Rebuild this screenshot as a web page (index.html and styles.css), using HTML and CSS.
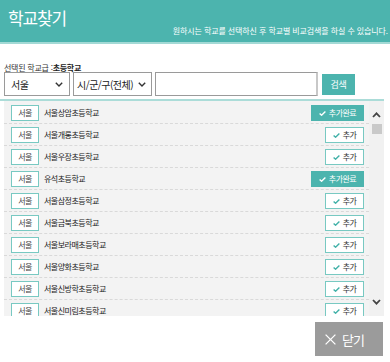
FILE: index.html
```html
<!DOCTYPE html>
<html lang="ko">
<head>
<meta charset="utf-8">
<title>학교찾기</title>
<link rel="stylesheet" href="styles.css">
</head>
<body>
<div class="header">
  <h1 class="title">학교찾기</h1>
  <p class="subtitle">원하시는 학교를 선택하신 후 학교별 비교검색을 하실 수 있습니다.</p>
</div>
<div class="content">
  <div class="level">선택된 학교급 :<b>초등학교</b></div>
  <div class="filters">
    <div class="select select-city"><span>서울</span><svg class="chev" width="8" height="5" viewBox="0 0 8 5"><polyline points="0.8,0.8 4,4 7.2,0.8" fill="none" stroke="#333" stroke-width="1.4"/></svg></div>
    <div class="select select-gu"><span>시/군/구(전체)</span><svg class="chev" width="8" height="5" viewBox="0 0 8 5"><polyline points="0.8,0.8 4,4 7.2,0.8" fill="none" stroke="#333" stroke-width="1.4"/></svg></div>
    <div class="search-input"></div>
    <div class="search-btn">검색</div>
  </div>
</div>
<div class="list">
  <div class="rows">
    <div class="row"><span class="region">서울</span><span class="name">서울상암초등학교</span><span class="btn done"><svg width="7" height="5" viewBox="0 0 7 5"><polyline points="0.6,2.4 2.6,4.2 6.4,0.6" fill="none" stroke="#fff" stroke-width="1.4"/></svg>추가완료</span></div>
    <div class="row"><span class="region">서울</span><span class="name">서울개롱초등학교</span><span class="btn add"><svg width="7" height="5" viewBox="0 0 7 5"><polyline points="0.6,2.4 2.6,4.2 6.4,0.6" fill="none" stroke="#3fb0a7" stroke-width="1.4"/></svg>추가</span></div>
    <div class="row"><span class="region">서울</span><span class="name">서울우장초등학교</span><span class="btn add"><svg width="7" height="5" viewBox="0 0 7 5"><polyline points="0.6,2.4 2.6,4.2 6.4,0.6" fill="none" stroke="#3fb0a7" stroke-width="1.4"/></svg>추가</span></div>
    <div class="row"><span class="region">서울</span><span class="name">유석초등학교</span><span class="btn done"><svg width="7" height="5" viewBox="0 0 7 5"><polyline points="0.6,2.4 2.6,4.2 6.4,0.6" fill="none" stroke="#fff" stroke-width="1.4"/></svg>추가완료</span></div>
    <div class="row"><span class="region">서울</span><span class="name">서울삼정초등학교</span><span class="btn add"><svg width="7" height="5" viewBox="0 0 7 5"><polyline points="0.6,2.4 2.6,4.2 6.4,0.6" fill="none" stroke="#3fb0a7" stroke-width="1.4"/></svg>추가</span></div>
    <div class="row"><span class="region">서울</span><span class="name">서울금북초등학교</span><span class="btn add"><svg width="7" height="5" viewBox="0 0 7 5"><polyline points="0.6,2.4 2.6,4.2 6.4,0.6" fill="none" stroke="#3fb0a7" stroke-width="1.4"/></svg>추가</span></div>
    <div class="row"><span class="region">서울</span><span class="name">서울보라매초등학교</span><span class="btn add"><svg width="7" height="5" viewBox="0 0 7 5"><polyline points="0.6,2.4 2.6,4.2 6.4,0.6" fill="none" stroke="#3fb0a7" stroke-width="1.4"/></svg>추가</span></div>
    <div class="row"><span class="region">서울</span><span class="name">서울양화초등학교</span><span class="btn add"><svg width="7" height="5" viewBox="0 0 7 5"><polyline points="0.6,2.4 2.6,4.2 6.4,0.6" fill="none" stroke="#3fb0a7" stroke-width="1.4"/></svg>추가</span></div>
    <div class="row"><span class="region">서울</span><span class="name">서울신방학초등학교</span><span class="btn add"><svg width="7" height="5" viewBox="0 0 7 5"><polyline points="0.6,2.4 2.6,4.2 6.4,0.6" fill="none" stroke="#3fb0a7" stroke-width="1.4"/></svg>추가</span></div>
    <div class="row"><span class="region">서울</span><span class="name">서울신미림초등학교</span><span class="btn add"><svg width="7" height="5" viewBox="0 0 7 5"><polyline points="0.6,2.4 2.6,4.2 6.4,0.6" fill="none" stroke="#3fb0a7" stroke-width="1.4"/></svg>추가</span></div>
  </div>
  <div class="scrollbar">
    <svg class="arrow-up" width="9" height="6" viewBox="0 0 9 6"><polyline points="1,5 4.5,1.3 8,5" fill="none" stroke="#444" stroke-width="1.8"/></svg>
    <div class="thumb"></div>
    <svg class="arrow-down" width="9" height="6" viewBox="0 0 9 6"><polyline points="1,1 4.5,4.7 8,1" fill="none" stroke="#444" stroke-width="1.8"/></svg>
  </div>
</div>
<div class="footer">
  <div class="close-btn"><svg width="11" height="11" viewBox="0 0 11 11"><path d="M0.6 0.6 L10.4 10.4 M10.4 0.6 L0.6 10.4" stroke="#fff" stroke-width="1.3" fill="none"/></svg><span>닫기</span></div>
</div>
</body>
</html>
```

FILE: styles.css
```css
* { box-sizing: border-box; }
html, body { margin: 0; padding: 0; background: #fff; }
body {
  font-family: "Noto Sans CJK KR", "Noto Sans", sans-serif;
  color: #333;
  width: 390px;
  height: 362px;
  overflow: hidden;
}

.header {
  height: 44px;
  background: #4cb4ae;
  border-bottom: 2px solid #a3d9d5;
  display: flex;
  justify-content: space-between;
  padding: 0 2px 0 8px;
}
.title {
  margin: 0;
  padding-top: 9px;
  font-size: 17px;
  line-height: 17px;
  font-weight: 400;
  letter-spacing: -1.1px;
  color: #fff;
  align-self: flex-start;
}
.subtitle {
  margin: 0;
  align-self: flex-end;
  padding-bottom: 7px;
  font-size: 8px;
  line-height: 8px;
  letter-spacing: -0.1px;
  color: #fff;
}

.content { padding: 0 4px; }
.level {
  margin-top: 19px;
  font-size: 8px;
  line-height: 9px;
  letter-spacing: -0.25px;
  color: #333;
}
.level b { font-weight: 700; color: #222; }

.filters {
  display: flex;
  align-items: center;
  height: 24px;
}
.select {
  height: 24px;
  border: 1px solid #9a9a9a;
  display: flex;
  align-items: center;
  justify-content: space-between;
  font-size: 10px;
  letter-spacing: -0.5px;
  color: #222;
  background: #fff;
}
.select-city { width: 66px; padding: 0 6px 0 6px; }
.select-gu { width: 79px; margin-left: 3px; padding: 0 5px 0 3px; }
.search-input {
  width: 163px;
  height: 24px;
  margin-left: 3px;
  border: 1px solid #9a9a9a;
  border-right: 2px solid #c8c8c8;
  background: #fff;
}
.search-btn {
  width: 33px;
  height: 21px;
  margin-left: 4px;
  background: #4cb4ae;
  color: #fff;
  font-size: 9px;
  letter-spacing: -0.3px;
  display: flex;
  align-items: center;
  justify-content: center;
}

.list {
  margin-top: 3px;
  width: 384px;
  border-top: 2px solid #abdcd8;
  display: flex;
  height: 217px;
}
.rows {
  margin-left: 4px;
  width: 365px;
  padding-top: 1px;
  background: #f3f3f3;
  overflow: hidden;
}
.row {
  height: 22px;
  border-bottom: 1px dashed #d9d9d9;
  display: flex;
  align-items: flex-start;
  padding: 3px 5px 0 7px;
  font-size: 8px;
  letter-spacing: -0.5px;
}
.region {
  width: 28px;
  height: 16px;
  border: 1px solid #78c9c2;
  background: #fff;
  color: #444;
  display: flex;
  align-items: center;
  justify-content: center;
  line-height: 1;
}
.name {
  margin-left: 5px;
  line-height: 16px;
  color: #222;
}
.btn {
  margin-left: auto;
  height: 16px;
  display: flex;
  align-items: center;
  justify-content: center;
  line-height: 1;
}
.btn svg { margin-right: 3px; }
.done {
  width: 53px;
  background: #4cb4ae;
  color: #fff;
}
.add {
  width: 39px;
  border: 1px solid #78c9c2;
  background: #fff;
  color: #333;
}

.scrollbar {
  width: 15px;
  background: #f1f1f1;
  display: flex;
  flex-direction: column;
  align-items: center;
}
.arrow-up { margin-top: 11px; }
.thumb {
  margin-top: 6px;
  width: 10px;
  height: 10px;
  background: #c9c9c9;
}
.arrow-down { margin-top: auto; margin-bottom: 11px; }

.footer {
  display: flex;
  justify-content: flex-end;
  padding: 6px 7px 0 0;
}
.close-btn {
  width: 68px;
  height: 34px;
  background: #9b9b9b;
  display: flex;
  align-items: center;
  padding-left: 10px;
  color: #fff;
  font-size: 13px;
  letter-spacing: -1px;
}
.close-btn span { margin-left: 6px; }
```
